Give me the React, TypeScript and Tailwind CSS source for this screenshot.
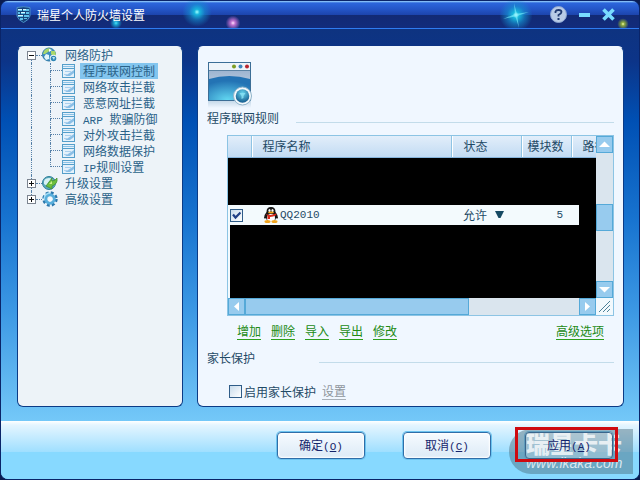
import React from "react";

const mono = "font-['Liberation_Mono','Noto_Sans_CJK_SC',monospace] text-[11px]";

function ShieldIcon() {
  return (
    <svg width="15" height="17" viewBox="0 0 15 17" aria-hidden="true">
      <path d="M1 1.500 Q7.500 0 14 1.500 V10 Q13 14 7.500 16.500 Q2 14 1 10Z" fill="#16447c" stroke="#4a90c8" strokeWidth="1" />
      <path d="M2 3h4v2H2zM7 3h6v2H7zM2 6h2v2H2zM5 6h4v2H5zM10 6h3v2h-3zM2 9h5v2H2zM8 9h5v2H8zM4 12h3v2H4zM8 12h3v1H8z" fill="#5fc0ea" />
      <path d="M2 3h4v1H2zM5 6h4v1H5zM2 9h5v1H2zM7 3h3v1H7z" fill="#d2f6ff" />
    </svg>
  );
}

function GlobeIcon() {
  return (
    <svg width="16" height="16" viewBox="0 0 16 16" aria-hidden="true">
      <circle cx="7" cy="7.500" r="6.500" fill="#3f8fc0" stroke="#2c78a6" />
      <path d="M2 4 Q5 0 9 2 L6 5 3 7 1 7ZM9 4l4 0 1 4-3 1-2-2Z" fill="#a9d86a" />
      <path d="M4 7l3 1 0 4-3 1-2-3Z" fill="#e4f6fb" />
      <path d="M7 2l3 1-3 2Z" fill="#fff" />
      <circle cx="11.500" cy="11.500" r="3.800" fill="#f2f8fb" />
      <circle cx="11.500" cy="11.500" r="2.800" fill="#2f86b5" />
      <path d="M10 10h3l-1 3z" fill="#b9e6f5" />
    </svg>
  );
}

function UpgradeIcon() {
  return (
    <svg width="16" height="16" viewBox="0 0 16 16" aria-hidden="true">
      <circle cx="7" cy="8" r="6.500" fill="#5aa8bd" stroke="#2f7f98" />
      <path d="M2 9 Q1 3 7 3 Q10 3 11 5 Q6 5 5 11Z" fill="#d8f2f4" />
      <path d="M4 11 L10 3 10 6 Q13 6 15 3 Q16 9 10 11 L10 14 Z" fill="#6cbf3c" stroke="#3d8a2c" strokeWidth=".7" />
      <path d="M7 9l3-3v3z" fill="#c9f08b" />
    </svg>
  );
}

function GearIcon() {
  return (
    <svg width="16" height="16" viewBox="0 0 16 16" aria-hidden="true">
      <circle cx="8" cy="8" r="6.200" fill="none" stroke="#2b78ad" strokeWidth="3" strokeDasharray="2.800 2.070" />
      <circle cx="8" cy="8" r="4.200" fill="none" stroke="#58aedb" strokeWidth="3" />
      <path d="M8 2 A6 6 0 0 0 2 8" fill="none" stroke="#a4dcf5" strokeWidth="1.500" />
      <path d="M8 6l3 2-3 3-2-2z" fill="#f5fafd" />
    </svg>
  );
}

function PageIcon() {
  return (
    <svg width="14" height="14" viewBox="0 0 14 14" aria-hidden="true">
      <rect x=".5" y=".5" width="12" height="13" fill="#e4f1fb" stroke="#559fca" />
      <path d="M1 2.500h11" stroke="#8cc3e6" strokeWidth="1" />
      <path d="M1 4h11v1H1z" fill="#559fca" />
      <path d="M3 12 L12 6 V9 L8 12Z" fill="#8bbfe6" />
      <path d="M3 7h6v1H3zM2 10h4v1H2z" fill="#a9d0ee" />
    </svg>
  );
}

function WindowIcon() {
  return (
    <svg width="46" height="46" viewBox="0 0 46 46" aria-hidden="true">
      <defs>
        <radialGradient id="screen" cx=".45" cy="1" r=".8">
          <stop offset="0" stopColor="#62d8f2" />
          <stop offset="1" stopColor="#2373b4" />
        </radialGradient>
        <linearGradient id="sky" x2="0" y2="1">
          <stop offset="0" stopColor="#8fa9c8" />
          <stop offset="1" stopColor="#d3e1ef" />
        </linearGradient>
        <linearGradient id="mirror" x2="0" y2="1">
          <stop offset="0" stopColor="#c6d9e9" />
          <stop offset="1" stopColor="#f0f7ff" />
        </linearGradient>
        <radialGradient id="lens" cx=".5" cy=".3" r=".7">
          <stop offset="0" stopColor="#67d6ef" />
          <stop offset="1" stopColor="#145a8d" />
        </radialGradient>
      </defs>
      <rect x="0" y="39" width="43" height="7" fill="url(#mirror)" />
      <rect x=".5" y=".5" width="42" height="38" fill="url(#sky)" stroke="#3c6e96" />
      <rect x="1" y="1" width="41" height="7" fill="#eef4f9" />
      <path d="M1 8.500h41" stroke="#5b83a4" />
      <path d="M1 17 Q21 11 42 17 V38 H1Z" fill="url(#screen)" />
      <circle cx="26" cy="4.500" r="2" fill="#7c9d23" />
      <circle cx="32.500" cy="4.500" r="2" fill="#3f86bd" />
      <circle cx="39" cy="4.500" r="2" fill="#b8262f" />
      <circle cx="34.500" cy="34" r="9" fill="#f4f9fc" stroke="#8fb4cb" />
      <circle cx="34.500" cy="34" r="6.800" fill="url(#lens)" />
      <path d="M31.500 31h6l-2 3v2l-2 1v-3z" fill="#8be3f5" opacity=".8" />
    </svg>
  );
}

function PenguinIcon() {
  return (
    <svg width="16" height="16" viewBox="0 0 16 16" aria-hidden="true">
      <path d="M8 0 Q12.500 0 12.500 5 Q15 8 15 11 Q14 12 13 11 Q12 15 8 15 Q4 15 3 11 Q2 12 1 11 Q1 8 3.500 5 Q3.500 0 8 0Z" fill="#161616" />
      <ellipse cx="8" cy="11" rx="4" ry="4" fill="#fff" />
      <ellipse cx="6.500" cy="3.500" rx="1.100" ry="1.500" fill="#fff" />
      <ellipse cx="9.500" cy="3.500" rx="1.100" ry="1.500" fill="#fff" />
      <ellipse cx="8" cy="5.600" rx="3" ry="1" fill="#f2a51c" />
      <path d="M3 7 Q8 9 13 6.500 L13.500 8 Q10 10 7 10 L7 12 4.500 12 4.500 9Z" fill="#dc2b1c" />
      <ellipse cx="4.500" cy="14.500" rx="3" ry="1.500" fill="#f0a41e" />
      <ellipse cx="11.500" cy="14.500" rx="3" ry="1.500" fill="#f0a41e" />
    </svg>
  );
}

function Arrow({ d }: { d: string }) {
  return (
    <svg width="11" height="11" viewBox="0 0 11 11" aria-hidden="true">
      <path d={d} fill="#fff" />
    </svg>
  );
}

function Stars() {
  return (
    <div className="pointer-events-none absolute inset-0 overflow-hidden" aria-hidden="true">
      <div className="absolute top-[-5px] left-[180px] h-8 w-8 bg-[radial-gradient(circle,#9fffff_0,#18b4dc_12%,#1590d090_35%,transparent_65%)]" />
      <div className="absolute top-[15px] left-[108px] h-[14px] w-[14px] bg-[radial-gradient(circle,#4fe4f4_0,#18a0d0_20%,transparent_60%)]" />
      <div className="absolute top-[14px] left-[224px] h-4 w-4 bg-[radial-gradient(circle,#ffe0ff_0,#c070d0_20%,transparent_65%)]" />
      <div className="absolute top-[-4px] right-[105px] h-9 w-9 bg-[radial-gradient(circle,#d8ffff_0,#18b8dc_12%,#1590d0a0_35%,transparent_65%)]" />
      <svg className="absolute top-0 right-[109px]" width="28" height="28" viewBox="0 0 28 28">
        <path d="M12 2L15 13 17 27 13 14ZM1 18L13 13 27 11 15 15Z" fill="#7ff2ff" opacity=".6" />
      </svg>
      <div className="absolute top-[15px] right-[8px] h-4 w-4 bg-[radial-gradient(circle,#f4ffb0_0,#8aa83c_15%,transparent_50%)]" />
    </div>
  );
}

function TitleBar() {
  return (
    <header className="relative flex h-7 shrink-0 items-center border-b border-[#2f7cf0] bg-[linear-gradient(#9fd8ff_0,#2c66dc_2px,#2456c8_8px,#1c44ac_14px,#122a74_14px,#122c7c)] pr-6 pl-[15px]">
      <Stars />
      <ShieldIcon />
      <h1 className="relative ml-[6px] flex-1 leading-4 text-white">瑞星个人防火墙设置</h1>
      <div className="relative flex items-center">
        <button aria-label="帮助" className="mr-3">
          <svg width="17" height="17" viewBox="0 0 17 17">
            <circle cx="8.500" cy="8.500" r="8" fill="#b9cce6" stroke="#8aa4d0" />
            <path d="M5.500 7V5.500Q6 4 8.500 4Q11.500 4 11.500 6Q11.500 7.500 8.500 9V10.500" fill="none" stroke="#203a70" strokeWidth="1.800" />
            <path d="M7.500 12h2v2h-2z" fill="#203a70" />
          </svg>
        </button>
        <button aria-label="最小化" className="mr-3">
          <svg width="11" height="13" viewBox="0 0 11 13">
            <path d="M0 5h11v4H0z" fill="#79dcff" />
          </svg>
        </button>
        <button aria-label="关闭">
          <svg width="13" height="13" viewBox="0 0 13 13">
            <path d="M1.500 1.500l10 10M11.500 1.500l-10 10" stroke="#79dcff" strokeWidth="3.600" />
          </svg>
        </button>
      </div>
    </header>
  );
}

function RootNode({ icon, label, open, first, last }: { icon: React.ReactNode; label: string; open?: boolean; first?: boolean; last?: boolean }) {
  return (
    <div className="flex h-4 items-center pl-[9px]">
      <div className="flex h-4 w-[9px] flex-col items-center">
        <span className={first ? "h-1" : "h-1 border-l border-dotted border-[#5580a8]"} />
        <button aria-label={open ? "折叠" : "展开"} className="grid h-[9px] w-[9px] place-items-center border border-[#7c8490] bg-white">
          <svg width="5" height="5" viewBox="0 0 5 5">
            <path d={open ? "M0 2h5v1H0z" : "M0 2h5v1H0zM2 0h1v5H2z"} fill="#101010" />
          </svg>
        </button>
        <span className={last ? "h-[3px]" : "h-[3px] border-l border-dotted border-[#5580a8]"} />
      </div>
      <span className="w-[6px] border-t border-dotted border-[#5580a8]" />
      {icon}
      <span className="ml-[7px]">{label}</span>
    </div>
  );
}

const items: { label: React.ReactNode; selected?: boolean }[] = [
  { label: "程序联网控制", selected: true },
  { label: "网络攻击拦截" },
  { label: "恶意网址拦截" },
  { label: <><span className={mono}>ARP </span>欺骗防御</> },
  { label: "对外攻击拦截" },
  { label: "网络数据保护" },
  { label: <><span className={mono}>IP</span>规则设置</> },
];

function Sidebar() {
  return (
    <nav className="w-[166px] shrink-0 rounded-md border border-[#0b3b86] border-t-[#edf3f8] bg-[#edf3f8] leading-4 text-[#2a6288]">
      <RootNode icon={<GlobeIcon />} label="网络防护" open first />
      <ul>
        {items.map((item, i) => (
          <li key={i} className="flex h-4 items-center pl-[13px]">
            <span className="h-4 w-[19px] border-l border-dotted border-[#5580a8]" />
            <span className="flex w-3 flex-col">
              <span className="h-2 border-b border-l border-dotted border-[#5580a8]" />
              <span className={i === items.length - 1 ? "h-2" : "h-2 border-l border-dotted border-[#5580a8]"} />
            </span>
            <PageIcon />
            <button className={item.selected ? "ml-1 h-4 bg-[#83c5ee] px-[3px] whitespace-pre" : "ml-1 h-4 px-[3px] whitespace-pre"}>{item.label}</button>
          </li>
        ))}
      </ul>
      <RootNode icon={<UpgradeIcon />} label="升级设置" />
      <RootNode icon={<GearIcon />} label="高级设置" last />
    </nav>
  );
}

function CheckBox({ id, label, defaultChecked }: { id: string; label?: string; defaultChecked?: boolean }) {
  return (
    <span className="grid h-[13px] w-[13px] shrink-0 place-items-center">
      <input
        id={id}
        type="checkbox"
        aria-label={label}
        defaultChecked={defaultChecked}
        className="peer h-[13px] w-[13px] appearance-none border border-[#2f5c88] bg-linear-to-br from-[#c9dcec] to-white [grid-area:1/1]"
      />
      <svg className="pointer-events-none invisible [grid-area:1/1] peer-checked:visible" width="9" height="9" viewBox="0 0 9 9">
        <path d="M1 3.500L3.500 6.500L8.500 1.500" fill="none" stroke="#1f3f86" strokeWidth="2.200" />
      </svg>
    </span>
  );
}

const headCell = "h-[21px] border-r border-b border-r-white border-b-[#86b4dc] p-0 text-left font-normal shadow-[inset_-1px_0_#8fc4e4]";
const scrollButton = "grid h-[17px] w-[17px] shrink-0 place-items-center border border-[#55a9d8] bg-[#97cbee]";

function RuleList() {
  return (
    <div className="mr-[9px] ml-[29px] grid grid-cols-[minmax(0,1fr)_17px] border border-[#8cc4e4] bg-[#f2f9fd] text-[#1f4a66]">
      <table className="w-full table-fixed border-collapse leading-4">
        <colgroup>
          <col className="w-6" />
          <col />
          <col className="w-[70px]" />
          <col className="w-[50px]" />
          <col className="w-6" />
        </colgroup>
        <thead>
          <tr className="bg-linear-to-b from-[#e2eefa] to-[#c2dbf3]">
            <th className={headCell} aria-label="启用" />
            <th className={headCell + " pl-[10px]"}>程序名称</th>
            <th className={headCell + " pl-[11px]"}>状态</th>
            <th className={headCell + " pl-[5px]"}>模块数</th>
            <th className="h-[21px] overflow-hidden border-b border-[#86b4dc] p-0 pl-[10px] text-left font-normal whitespace-nowrap">路径</th>
          </tr>
        </thead>
        <tbody>
          <tr className="bg-black">
            <td colSpan={5} className="h-12 p-0" />
          </tr>
          <tr className="h-5 bg-[#f3fafd]">
            <td className="p-0 pl-[2px]">
              <CheckBox id="rule-qq" label="启用 QQ2010" defaultChecked />
            </td>
            <td className="p-0 pl-[11px]">
              <span className={"flex items-center gap-px " + mono}>
                <PenguinIcon />
                QQ2010
              </span>
            </td>
            <td className="p-0 pl-[11px]">
              <button className="flex items-center gap-2">
                允许
                <svg width="9" height="8" viewBox="0 0 9 8" aria-hidden="true">
                  <path d="M0 0h9L5.500 7h-2z" fill="#164a63" />
                </svg>
              </button>
            </td>
            <td className={"p-0 pr-[9px] text-right " + mono}>5</td>
            <td className="bg-black p-0">
              <div className="h-5 w-[7px] bg-[#f3fafd]" />
            </td>
          </tr>
          <tr>
            <td colSpan={5} className="h-[73px] p-0 pl-[2px]">
              <div className="h-full min-h-[73px] bg-black" />
            </td>
          </tr>
        </tbody>
      </table>
      <div className="flex flex-col bg-[#dae5ee]">
        <button aria-label="向上滚动" className={scrollButton}>
          <Arrow d="M0 8L5.500 2.500L11 8Z" />
        </button>
        <div className="grow-[3]" />
        <div className="h-[27px] border border-[#55a9d8] bg-[#97cbee]" />
        <div className="grow-[3]" />
        <button aria-label="向下滚动" className={scrollButton}>
          <Arrow d="M0 3L5.500 8.500L11 3Z" />
        </button>
      </div>
      <div className="flex bg-[#dae5ee]">
        <button aria-label="向左滚动" className={scrollButton}>
          <Arrow d="M8 1L3 5.500L8 10Z" />
        </button>
        <div className="flex-1">
          <div className="h-[17px] w-[67%] border border-[#55a9d8] bg-[#97cbee]" />
        </div>
        <button aria-label="向右滚动" className={scrollButton}>
          <Arrow d="M3 1L8 5.500L3 10Z" />
        </button>
      </div>
      <svg width="17" height="17" viewBox="0 0 17 17" aria-hidden="true">
        <path d="M3 14L14 3M7 14L14 7M11 14L14 11" stroke="#4d8298" />
      </svg>
    </div>
  );
}

function Heading({ children, gap }: { children: string; gap: string }) {
  return (
    <div className="mr-[9px] ml-[9px] flex h-4 items-center">
      <h2 className={"leading-4 text-[#1f4a66] " + gap}>{children}</h2>
      <span className="mt-2 h-px flex-1 bg-[#c3dcea]" />
    </div>
  );
}

function TextLink({ children }: { children: string }) {
  return (
    <a href="#" className="border-b border-[#2f9e1c] leading-4 text-[#228a14]">
      {children}
    </a>
  );
}

function Content() {
  return (
    <main className="min-w-0 flex-1 rounded-md border border-[#0b3b86] border-t-[#f0f7ff] bg-[#f0f7ff] pt-[15px] pb-[6px]">
      <div className="ml-[10px] h-12">
        <WindowIcon />
      </div>
      <Heading gap="mr-[17px]">程序联网规则</Heading>
      <div className="h-[9px]" />
      <RuleList />
      <div className="mt-[7px] mr-[19px] mb-[10px] ml-[39px] flex gap-[10px]">
        <TextLink>增加</TextLink>
        <TextLink>删除</TextLink>
        <TextLink>导入</TextLink>
        <TextLink>导出</TextLink>
        <TextLink>修改</TextLink>
        <span className="flex-1" />
        <TextLink>高级选项</TextLink>
      </div>
      <Heading gap="mr-16">家长保护</Heading>
      <div className="mt-[17px] ml-[31px] flex items-center">
        <CheckBox id="parental" />
        <label htmlFor="parental" className="ml-[2px] text-[#1f4a66]">启用家长保护</label>
        <a href="#" className="ml-[6px] border-b border-[#a8b0b8] leading-4 text-[#8e959c]">设置</a>
      </div>
    </main>
  );
}

function DialogButton({ label, hotkey, veiled }: { label: string; hotkey: string; veiled?: boolean }) {
  return (
    <button
      className={
        veiled
          ? "relative h-[27px] w-[88px] rounded-[4px] border border-[#3a668c] bg-white/25 leading-4 text-[#14246c] shadow-[0_0_0_1px_#5f9cbc]"
          : "h-[27px] w-[88px] rounded-[4px] border border-[#2f6ea8] bg-linear-to-b from-[#f6fbff] to-[#dceaf6] leading-4 text-[#14246c] shadow-[inset_0_0_2px_1px_#ffffff,0_0_0_1px_#6cc4f0]"
      }
    >
      {label}
      <span className={mono}>
        (<u>{hotkey}</u>)
      </span>
    </button>
  );
}

function Footer() {
  return (
    <footer className="relative flex h-[58px] shrink-0 justify-end bg-[linear-gradient(#ffffff_0,#e4f5ff_4px,#9fdfff_31px,#87d9ff_31px)] pt-[11px] pr-[26px]">
      <div className="pointer-events-none absolute top-2 right-[6px] h-[45px] w-[124px] rounded-l-[22px] bg-[#486878]/45 pl-[17px] text-white/75">
        <div className="h-[27px] font-['Noto_Sans_CJK_SC',sans-serif] text-2xl leading-[27px] font-black whitespace-nowrap">瑞星卡卡</div>
        <div className="font-['Liberation_Sans',sans-serif] text-sm leading-[14px] italic">www.ikaka.com</div>
      </div>
      <div className="flex gap-[38px]">
        <DialogButton label="确定" hotkey="O" />
        <DialogButton label="取消" hotkey="C" />
      </div>
      <div className="ml-[34px]">
        <DialogButton label="应用" hotkey="A" veiled />
      </div>
      <div className="pointer-events-none absolute top-[6px] right-[21px] h-[35px] w-[103px] border-3 border-[#cf0a10]" />
    </footer>
  );
}

export default function App() {
  return (
    <div className="bg-[#0a1c50] font-['Noto_Sans_CJK_SC',sans-serif] text-xs">
      <div className="flex min-h-screen flex-col overflow-hidden rounded-lg border border-[#0a2468] bg-[linear-gradient(#0e3380_28px,#0c3488_60px,#0050b4_120px,#1874d0_220px,#3c98e4_310px,#74c8f8_420px)]">
        <TitleBar />
        <div className="flex flex-1 gap-[14px] pt-[17px] pr-[15px] pb-[14px] pl-4">
          <Sidebar />
          <Content />
        </div>
        <Footer />
      </div>
    </div>
  );
}
